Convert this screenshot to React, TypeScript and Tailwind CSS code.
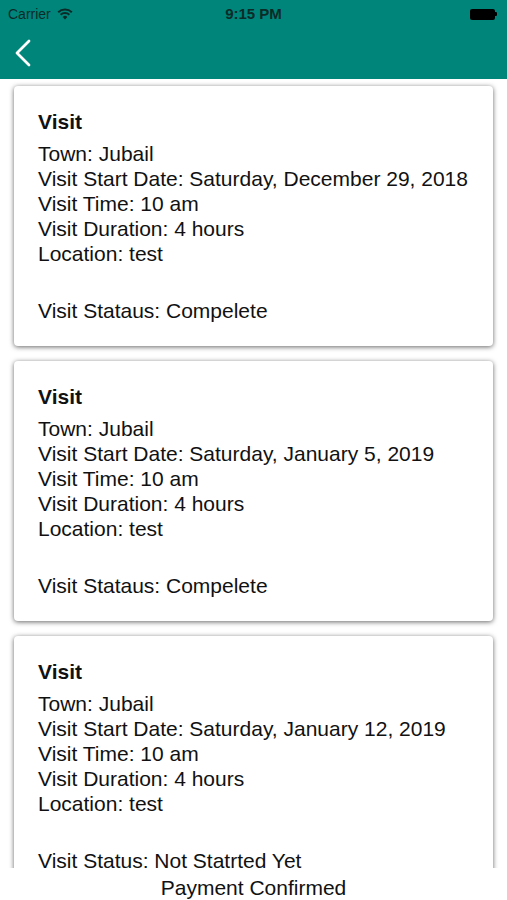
type Visit = {
  town: string
  startDate: string
  time: string
  duration: string
  location: string
  status: string
}

const VISITS: Visit[] = [
  {
    town: 'Jubail',
    startDate: 'Saturday, December 29, 2018',
    time: '10 am',
    duration: '4 hours',
    location: 'test',
    status: 'Visit Stataus: Compelete',
  },
  {
    town: 'Jubail',
    startDate: 'Saturday, January 5, 2019',
    time: '10 am',
    duration: '4 hours',
    location: 'test',
    status: 'Visit Stataus: Compelete',
  },
  {
    town: 'Jubail',
    startDate: 'Saturday, January 12, 2019',
    time: '10 am',
    duration: '4 hours',
    location: 'test',
    status: 'Visit Status: Not Statrted Yet',
  },
]

function WifiIcon() {
  return (
    <svg width="16" height="12" viewBox="0 0 16 12" className="text-[#0b2b28]">
      <path d="M8 11.5 L5.6 8.9 A3.6 3.6 0 0 1 10.4 8.9 Z" fill="currentColor" />
      <path d="M3.6 6.8 A6.4 6.4 0 0 1 12.4 6.8" stroke="currentColor" strokeWidth="2" fill="none" />
      <path d="M1.2 4.2 A9.8 9.8 0 0 1 14.8 4.2" stroke="currentColor" strokeWidth="2" fill="none" />
    </svg>
  )
}

function Battery() {
  return (
    <div className="flex items-center">
      <div className="h-[11px] w-[25px] rounded-[2px] bg-black" />
      <div className="h-[4px] w-[2px] rounded-r-[1px] bg-black" />
    </div>
  )
}

// thin iOS style back chevron
function BackChevron() {
  return (
    <svg width="20" height="28" viewBox="0 0 20 28" className="text-white">
      <polyline
        points="15,2 3,14 15,26"
        fill="none"
        stroke="currentColor"
        strokeWidth="2.75"
        strokeLinecap="round"
        strokeLinejoin="round"
      />
    </svg>
  )
}

function VisitCard({ visit }: { visit: Visit }) {
  return (
    <div className="shrink-0 rounded-[4px] bg-white pb-[23px] pl-[24px] pr-3 pt-[23px] text-[21px] leading-[25px] text-[#111] shadow-[0_1px_5px_rgba(0,0,0,0.6)]">
      <div className="mb-[7px] font-bold">Visit</div>
      <div>Town: {visit.town}</div>
      <div>Visit Start Date: {visit.startDate}</div>
      <div>Visit Time: {visit.time}</div>
      <div>Visit Duration: {visit.duration}</div>
      <div>Location: {visit.location}</div>
      <div className="mt-[32px]">{visit.status}</div>
    </div>
  )
}

export default function App() {
  return (
    <div className="flex h-[900px] w-full flex-col overflow-hidden bg-white font-['Liberation_Sans',Arial,sans-serif]">
      <header className="shrink-0 bg-[#00857a]">
        <div className="relative flex h-[28px] items-center px-[8px] text-[14px] text-[#0b2b28]">
          <span>Carrier</span>
          <span className="ml-[6px]">
            <WifiIcon />
          </span>
          <span className="absolute left-1/2 -translate-x-1/2 text-[15px] font-bold">9:15 PM</span>
          <div className="ml-auto mr-[2px]">
            <Battery />
          </div>
        </div>
        <div className="flex h-[51px] items-center pl-[14px] pb-[1px]">
          <BackChevron />
        </div>
      </header>

      <main className="flex flex-1 flex-col gap-[15px] overflow-hidden px-[14px] pt-[7px]">
        {VISITS.map((v, i) => (
          <VisitCard key={i} visit={v} />
        ))}
      </main>

      <footer className="h-[32px] shrink-0 bg-white pt-[7px] text-center text-[21px] leading-[25px] text-[#111]">
        Payment Confirmed
      </footer>
    </div>
  )
}
